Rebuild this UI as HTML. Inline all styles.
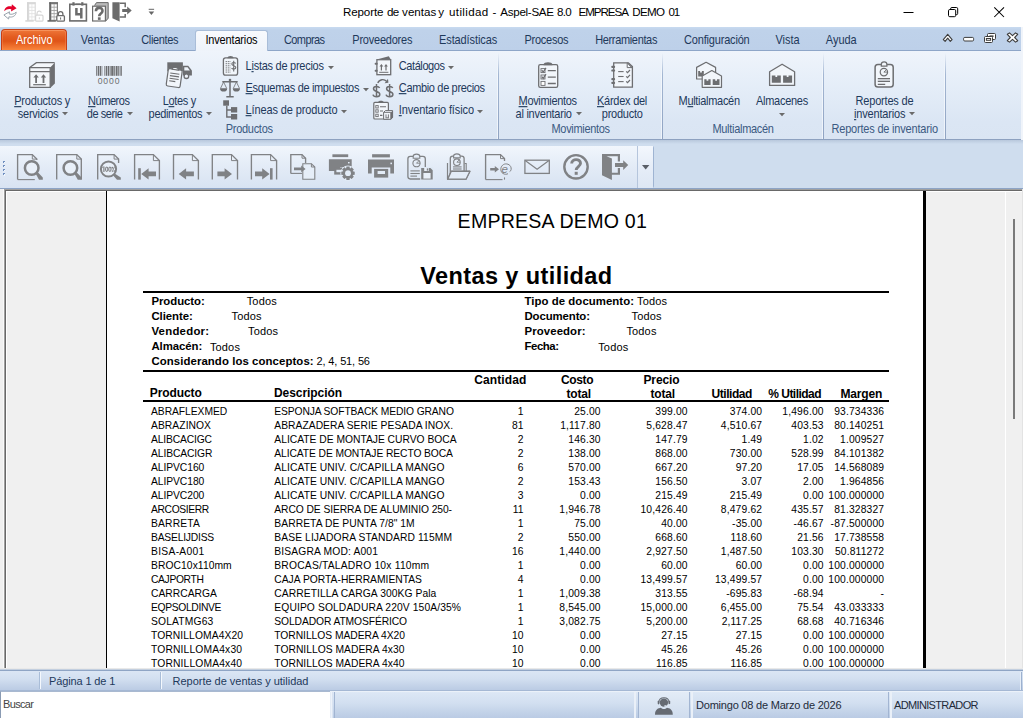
<!DOCTYPE html>
<html><head><meta charset="utf-8"><title>Reporte de ventas y utilidad - Aspel-SAE 8.0</title>
<style>
html,body{margin:0;padding:0;background:#fff;}
body{width:1023px;height:718px;overflow:hidden;font-family:"Liberation Sans",sans-serif;}
#app{position:relative;width:1023px;height:718px;overflow:hidden;background:#fff;}
.t{position:absolute;white-space:pre;line-height:normal;font-family:"Liberation Sans",sans-serif;}
.t u{text-decoration:underline;text-underline-offset:1px;text-decoration-thickness:1px;}
.b{position:absolute;}
svg{position:absolute;overflow:visible;}

</style></head>
<body>
<div id="app">
<div class="b" style="left:0px;top:0px;width:1023px;height:27px;background:#ffffff;"></div>
<span class="t" style="top:5.32px;font-size:11.6px;color:#000;letter-spacing:-0.108px;left:342.90px;">Reporte</span>
<span class="t" style="top:5.32px;font-size:11.6px;color:#000;letter-spacing:-0.706px;left:386.90px;">de</span>
<span class="t" style="top:5.32px;font-size:11.6px;color:#000;letter-spacing:-0.014px;left:402.10px;">ventas</span>
<span class="t" style="top:5.32px;font-size:11.6px;color:#000;left:438.30px;">y</span>
<span class="t" style="top:5.32px;font-size:11.6px;color:#000;letter-spacing:0.364px;left:449.00px;">utilidad</span>
<span class="t" style="top:5.32px;font-size:11.6px;color:#000;left:492.40px;">-</span>
<span class="t" style="top:5.32px;font-size:11.6px;color:#000;letter-spacing:-0.295px;left:500.30px;">Aspel-SAE</span>
<span class="t" style="top:5.32px;font-size:11.6px;color:#000;letter-spacing:-0.712px;left:556.90px;">8.0</span>
<span class="t" style="top:5.32px;font-size:11.6px;color:#000;letter-spacing:-1.051px;left:578.50px;">EMPRESA</span>
<span class="t" style="top:5.32px;font-size:11.6px;color:#000;letter-spacing:-0.627px;left:632.20px;">DEMO</span>
<span class="t" style="top:5.32px;font-size:11.6px;color:#000;letter-spacing:-1.206px;left:668.40px;">01</span>
<div class="b" style="left:0px;top:27px;width:1021px;height:24px;background:linear-gradient(#c8daf0 0,#bfd2ea 3px,#bdd0e9 100%);"></div>
<div class="b" style="left:0px;top:50px;width:1021px;height:1px;background:#8ea6c8;"></div>
<div class="b" style="left:1px;top:29px;width:66px;height:21px;background:linear-gradient(#ee7638 0%,#e35c20 35%,#df5417 55%,#ee6f2c 80%,#f9853c 100%);border:1px solid #c53f15;border-bottom:none;border-radius:4px 4px 0 0;box-sizing:border-box;box-shadow:inset 0 1px 0 rgba(255,170,120,.55),inset 1px 0 0 rgba(255,150,100,.35),inset -1px 0 0 rgba(255,150,100,.35);"></div>
<span class="t" style="top:33.87px;font-size:11px;color:#fff;letter-spacing:-0.031px;transform:scaleY(1.12);transform-origin:0 10.13px;left:16.00px;">Archivo</span>
<div class="b" style="left:195px;top:30px;width:73px;height:21px;background:linear-gradient(#f8fafd,#eef3fa);border:1px solid #a9bdd8;border-bottom:none;border-radius:3px 3px 0 0;box-sizing:border-box;"></div>
<span class="t" style="top:34.37px;font-size:11px;color:#1e395b;letter-spacing:0.052px;transform:scaleY(1.12);transform-origin:0 10.13px;left:80.80px;">Ventas</span>
<span class="t" style="top:34.37px;font-size:11px;color:#1e395b;letter-spacing:-0.350px;transform:scaleY(1.12);transform-origin:0 10.13px;left:141.20px;">Clientes</span>
<span class="t" style="top:34.37px;font-size:11px;color:#000;letter-spacing:-0.161px;transform:scaleY(1.12);transform-origin:0 10.13px;left:205.40px;">Inventarios</span>
<span class="t" style="top:34.37px;font-size:11px;color:#1e395b;letter-spacing:-0.604px;transform:scaleY(1.12);transform-origin:0 10.13px;left:284.00px;">Compras</span>
<span class="t" style="top:34.37px;font-size:11px;color:#1e395b;letter-spacing:-0.228px;transform:scaleY(1.12);transform-origin:0 10.13px;left:352.30px;">Proveedores</span>
<span class="t" style="top:34.37px;font-size:11px;color:#1e395b;letter-spacing:-0.101px;transform:scaleY(1.12);transform-origin:0 10.13px;left:439.00px;">Estadísticas</span>
<span class="t" style="top:34.37px;font-size:11px;color:#1e395b;letter-spacing:-0.237px;transform:scaleY(1.12);transform-origin:0 10.13px;left:524.40px;">Procesos</span>
<span class="t" style="top:34.37px;font-size:11px;color:#1e395b;letter-spacing:-0.348px;transform:scaleY(1.12);transform-origin:0 10.13px;left:595.20px;">Herramientas</span>
<span class="t" style="top:34.37px;font-size:11px;color:#1e395b;letter-spacing:-0.181px;transform:scaleY(1.12);transform-origin:0 10.13px;left:684.00px;">Configuración</span>
<span class="t" style="top:34.37px;font-size:11px;color:#1e395b;letter-spacing:-0.016px;transform:scaleY(1.12);transform-origin:0 10.13px;left:775.50px;">Vista</span>
<span class="t" style="top:34.37px;font-size:11px;color:#1e395b;letter-spacing:-0.025px;transform:scaleY(1.12);transform-origin:0 10.13px;left:825.80px;">Ayuda</span>
<div class="b" style="left:0px;top:51px;width:1021px;height:88px;background:linear-gradient(#eff4fb 0%,#e7eff9 30%,#dbe6f4 80%,#dae5f3 100%);"></div>
<div class="b" style="left:0px;top:139px;width:1021px;height:1px;background:#8da1c0;"></div>
<div class="b" style="left:497px;top:53px;width:1px;height:86px;background:linear-gradient(rgba(255,255,255,0),#f3f7fc 25%,#eef3fa 100%);"></div>
<div class="b" style="left:498px;top:53px;width:1px;height:86px;background:linear-gradient(rgba(160,180,208,0),#a3b6d2 25%,#8fa3c2 100%);"></div>
<div class="b" style="left:661px;top:53px;width:1px;height:86px;background:linear-gradient(rgba(255,255,255,0),#f3f7fc 25%,#eef3fa 100%);"></div>
<div class="b" style="left:662px;top:53px;width:1px;height:86px;background:linear-gradient(rgba(160,180,208,0),#a3b6d2 25%,#8fa3c2 100%);"></div>
<div class="b" style="left:822px;top:53px;width:1px;height:86px;background:linear-gradient(rgba(255,255,255,0),#f3f7fc 25%,#eef3fa 100%);"></div>
<div class="b" style="left:823px;top:53px;width:1px;height:86px;background:linear-gradient(rgba(160,180,208,0),#a3b6d2 25%,#8fa3c2 100%);"></div>
<div class="b" style="left:944px;top:53px;width:1px;height:86px;background:linear-gradient(rgba(255,255,255,0),#f3f7fc 25%,#eef3fa 100%);"></div>
<div class="b" style="left:945px;top:53px;width:1px;height:86px;background:linear-gradient(rgba(160,180,208,0),#a3b6d2 25%,#8fa3c2 100%);"></div>
<div class="b" style="left:1021px;top:27px;width:2px;height:113px;background:#f0f4fa;"></div>
<span class="t" style="top:95.37px;font-size:11px;color:#1e395b;letter-spacing:-0.199px;transform:scaleY(1.12);transform-origin:0 10.13px;left:14.20px;"><u>P</u>roductos y</span>
<span class="t" style="top:108.37px;font-size:11px;color:#1e395b;letter-spacing:-0.262px;transform:scaleY(1.12);transform-origin:0 10.13px;left:17.80px;">servicios</span>
<svg style="left:61.5px;top:111.8px" width="6" height="3.2" viewBox="0 0 6 3.2"><path d="M0 0h6L3 3.2z" fill="#6a6a6a"/></svg>
<span class="t" style="top:95.37px;font-size:11px;color:#1e395b;letter-spacing:-0.438px;transform:scaleY(1.12);transform-origin:0 10.13px;left:88.00px;"><u>N</u>úmeros</span>
<span class="t" style="top:108.37px;font-size:11px;color:#1e395b;letter-spacing:-0.406px;transform:scaleY(1.12);transform-origin:0 10.13px;left:86.70px;">de serie</span>
<svg style="left:126.5px;top:111.8px" width="6" height="3.2" viewBox="0 0 6 3.2"><path d="M0 0h6L3 3.2z" fill="#6a6a6a"/></svg>
<span class="t" style="top:95.37px;font-size:11px;color:#1e395b;letter-spacing:-0.311px;transform:scaleY(1.12);transform-origin:0 10.13px;left:162.70px;">L<u>o</u>tes y</span>
<span class="t" style="top:108.37px;font-size:11px;color:#1e395b;letter-spacing:-0.319px;transform:scaleY(1.12);transform-origin:0 10.13px;left:148.60px;">pedimentos</span>
<svg style="left:205.5px;top:111.8px" width="6" height="3.2" viewBox="0 0 6 3.2"><path d="M0 0h6L3 3.2z" fill="#6a6a6a"/></svg>
<span class="t" style="top:59.87px;font-size:11px;color:#1e395b;letter-spacing:-0.265px;transform:scaleY(1.12);transform-origin:0 10.13px;left:245.60px;">L<u>i</u>stas de precios</span>
<svg style="left:327.5px;top:65.8px" width="6" height="3.2" viewBox="0 0 6 3.2"><path d="M0 0h6L3 3.2z" fill="#6a6a6a"/></svg>
<span class="t" style="top:81.87px;font-size:11px;color:#1e395b;letter-spacing:-0.333px;transform:scaleY(1.12);transform-origin:0 10.13px;left:245.60px;"><u>E</u>squemas de impuestos</span>
<svg style="left:362.5px;top:87.8px" width="6" height="3.2" viewBox="0 0 6 3.2"><path d="M0 0h6L3 3.2z" fill="#6a6a6a"/></svg>
<span class="t" style="top:103.87px;font-size:11px;color:#1e395b;letter-spacing:-0.129px;transform:scaleY(1.12);transform-origin:0 10.13px;left:245.60px;"><u>L</u>íneas de producto</span>
<svg style="left:341px;top:109.8px" width="6" height="3.2" viewBox="0 0 6 3.2"><path d="M0 0h6L3 3.2z" fill="#6a6a6a"/></svg>
<span class="t" style="top:59.87px;font-size:11px;color:#1e395b;letter-spacing:-0.418px;transform:scaleY(1.12);transform-origin:0 10.13px;left:398.80px;">Catálogos</span>
<svg style="left:447.5px;top:65.8px" width="6" height="3.2" viewBox="0 0 6 3.2"><path d="M0 0h6L3 3.2z" fill="#6a6a6a"/></svg>
<span class="t" style="top:81.87px;font-size:11px;color:#1e395b;letter-spacing:-0.345px;transform:scaleY(1.12);transform-origin:0 10.13px;left:398.80px;"><u>C</u>ambio de precios</span>
<span class="t" style="top:103.87px;font-size:11px;color:#1e395b;letter-spacing:-0.115px;transform:scaleY(1.12);transform-origin:0 10.13px;left:398.80px;"><u>I</u>nventario físico</span>
<svg style="left:477px;top:109.8px" width="6" height="3.2" viewBox="0 0 6 3.2"><path d="M0 0h6L3 3.2z" fill="#6a6a6a"/></svg>
<span class="t" style="top:95.37px;font-size:11px;color:#1e395b;letter-spacing:-0.335px;transform:scaleY(1.12);transform-origin:0 10.13px;left:518.60px;"><u>M</u>ovimientos</span>
<span class="t" style="top:108.37px;font-size:11px;color:#1e395b;letter-spacing:-0.236px;transform:scaleY(1.12);transform-origin:0 10.13px;left:515.50px;">al inventario</span>
<svg style="left:575.5px;top:111.8px" width="6" height="3.2" viewBox="0 0 6 3.2"><path d="M0 0h6L3 3.2z" fill="#6a6a6a"/></svg>
<span class="t" style="top:95.37px;font-size:11px;color:#1e395b;letter-spacing:-0.255px;transform:scaleY(1.12);transform-origin:0 10.13px;left:597.00px;"><u>K</u>árdex del</span>
<span class="t" style="top:108.37px;font-size:11px;color:#1e395b;letter-spacing:-0.259px;transform:scaleY(1.12);transform-origin:0 10.13px;left:601.80px;">producto</span>
<span class="t" style="top:95.37px;font-size:11px;color:#1e395b;letter-spacing:-0.301px;transform:scaleY(1.12);transform-origin:0 10.13px;left:678.50px;">M<u>u</u>ltialmacén</span>
<span class="t" style="top:95.37px;font-size:11px;color:#1e395b;letter-spacing:-0.265px;transform:scaleY(1.12);transform-origin:0 10.13px;left:755.90px;">Almacenes</span>
<svg style="left:778.5px;top:112.8px" width="6" height="3.2" viewBox="0 0 6 3.2"><path d="M0 0h6L3 3.2z" fill="#6a6a6a"/></svg>
<span class="t" style="top:95.37px;font-size:11px;color:#1e395b;letter-spacing:-0.184px;transform:scaleY(1.12);transform-origin:0 10.13px;left:855.50px;">Reportes de</span>
<span class="t" style="top:108.37px;font-size:11px;color:#1e395b;letter-spacing:-0.180px;transform:scaleY(1.12);transform-origin:0 10.13px;left:854.00px;"><u>i</u>nventarios</span>
<svg style="left:908.5px;top:111.8px" width="6" height="3.2" viewBox="0 0 6 3.2"><path d="M0 0h6L3 3.2z" fill="#6a6a6a"/></svg>
<span class="t" style="top:123.37px;font-size:11px;color:#3b5a82;letter-spacing:-0.279px;transform:scaleY(1.12);transform-origin:0 10.13px;left:225.70px;">Productos</span>
<span class="t" style="top:123.37px;font-size:11px;color:#3b5a82;letter-spacing:-0.325px;transform:scaleY(1.12);transform-origin:0 10.13px;left:551.50px;">Movimientos</span>
<span class="t" style="top:123.37px;font-size:11px;color:#3b5a82;letter-spacing:-0.292px;transform:scaleY(1.12);transform-origin:0 10.13px;left:712.40px;">Multialmacén</span>
<span class="t" style="top:123.37px;font-size:11px;color:#3b5a82;letter-spacing:-0.199px;transform:scaleY(1.12);transform-origin:0 10.13px;left:831.50px;">Reportes de inventario</span>
<div class="b" style="left:0px;top:140px;width:1023px;height:50px;background:#cfddee;"></div>
<div class="b" style="left:0px;top:140px;width:1023px;height:4px;background:linear-gradient(#b9c8dc,#cfddee);"></div>
<div class="b" style="left:0px;top:146px;width:653px;height:42px;background:linear-gradient(#f1f6fc 0%,#e4ecf7 45%,#d8e3f2 100%);border-right:1px solid #9fb4d2;border-radius:0 2px 2px 0;"></div>
<div class="b" style="left:637px;top:146px;width:1px;height:42px;background:#b5c5dc;"></div>
<div class="b" style="left:638px;top:146px;width:15px;height:42px;background:linear-gradient(#f3f7fd,#e6edf8 50%,#dde7f4);"></div>
<div class="b" style="left:3px;top:160.7px;width:2px;height:2px;background:#6f8fc0;"></div>
<div class="b" style="left:4px;top:161.7px;width:1.4px;height:1.4px;background:#f4f8fd;"></div>
<div class="b" style="left:3px;top:164.9px;width:2px;height:2px;background:#6f8fc0;"></div>
<div class="b" style="left:4px;top:165.9px;width:1.4px;height:1.4px;background:#f4f8fd;"></div>
<div class="b" style="left:3px;top:169px;width:2px;height:2px;background:#6f8fc0;"></div>
<div class="b" style="left:4px;top:170px;width:1.4px;height:1.4px;background:#f4f8fd;"></div>
<div class="b" style="left:3px;top:173.2px;width:2px;height:2px;background:#6f8fc0;"></div>
<div class="b" style="left:4px;top:174.2px;width:1.4px;height:1.4px;background:#f4f8fd;"></div>
<svg style="left:641.8px;top:164.9px" width="7.4" height="4.4" viewBox="0 0 7.4 4.4"><path d="M0 0h7.4L3.7 4.4z" fill="#5a5f68"/></svg>
<div class="b" style="left:0px;top:188px;width:1023px;height:1px;background:#8da4c6;"></div>
<div class="b" style="left:0px;top:189px;width:1023px;height:480px;background:#f0f0f0;"></div>
<div class="b" style="left:3px;top:189px;width:1px;height:479px;background:#fafafa;"></div>
<div class="b" style="left:4px;top:189px;width:1018px;height:1px;background:#a0a0a0;"></div>
<div class="b" style="left:4px;top:189px;width:1px;height:479px;background:#a0a0a0;"></div>
<div class="b" style="left:5px;top:190px;width:1017px;height:1px;background:#696969;"></div>
<div class="b" style="left:5px;top:190px;width:1px;height:478px;background:#696969;"></div>
<div class="b" style="left:6px;top:191px;width:1016px;height:1px;background:#ffffff;"></div>
<div class="b" style="left:6px;top:191px;width:1px;height:477px;background:#ffffff;"></div>
<div class="b" style="left:107px;top:191px;width:817px;height:477px;background:#ffffff;"></div>
<div class="b" style="left:106px;top:191px;width:1px;height:477px;background:#000;"></div>
<div class="b" style="left:923px;top:191px;width:3px;height:477px;background:#000;"></div>
<div class="b" style="left:1005px;top:192px;width:1px;height:476px;background:#ffffff;"></div>
<div class="b" style="left:1022px;top:189px;width:1px;height:479px;background:#e3e3e3;"></div>
<div class="b" style="left:1013px;top:219px;width:2px;height:200px;background:#7a7a7a;"></div>
<div class="b" style="left:0px;top:668px;width:1023px;height:1px;background:#e9e9e9;"></div>
<div class="b" style="left:0px;top:669px;width:1023px;height:1px;background:#c3cfdf;"></div>
<div class="b" style="left:0px;top:670px;width:1023px;height:1px;background:#8fa5c5;"></div>
<div class="b" style="left:0px;top:671px;width:1023px;height:20px;background:linear-gradient(#dbe6f4 0%,#d2dff0 40%,#c3d2e8 75%,#b9cae3 100%);"></div>
<div class="b" style="left:0px;top:690px;width:1023px;height:1px;background:#a5b8d4;"></div>
<div class="b" style="left:39px;top:672px;width:1px;height:17px;background:#a9bdd8;"></div>
<div class="b" style="left:40px;top:672px;width:1px;height:17px;background:#f4f8fd;"></div>
<div class="b" style="left:160px;top:672px;width:1px;height:17px;background:#a9bdd8;"></div>
<div class="b" style="left:161px;top:672px;width:1px;height:17px;background:#f4f8fd;"></div>
<span class="t" style="top:674.87px;font-size:11px;color:#1e395b;letter-spacing:-0.133px;left:49.00px;">Página 1 de 1</span>
<span class="t" style="top:674.87px;font-size:11px;color:#1e395b;letter-spacing:-0.014px;left:172.50px;">Reporte de ventas y utilidad</span>
<div class="b" style="left:0px;top:691px;width:1023px;height:27px;background:linear-gradient(#f2f6fb 0%,#dce7f5 6%,#d2dff0 45%,#c2d2e8 80%,#bacbe4 100%);"></div>
<div class="b" style="left:0px;top:691px;width:330px;height:27px;background:#ffffff;border-left:1px solid #8a9bb3;border-top:1px solid #a9b9d0;box-sizing:border-box;"></div>
<span class="t" style="top:698.37px;font-size:11px;color:#444;letter-spacing:-0.650px;left:3.00px;">Buscar</span>
<div class="b" style="left:330px;top:692px;width:3px;height:26px;background:linear-gradient(90deg,#dfe8f4,#eef3fa,#cfdcee);"></div>
<div class="b" style="left:334px;top:692px;width:1px;height:26px;background:#a2b5d2;"></div>
<div class="b" style="left:634px;top:692px;width:2px;height:26px;background:#eaf0f8;"></div>
<div class="b" style="left:638px;top:692px;width:1px;height:26px;background:#a2b5d2;"></div>
<div class="b" style="left:639px;top:692px;width:50px;height:26px;background:linear-gradient(#e3ecf7,#d9e4f2 50%,#cfdcee);"></div>
<div class="b" style="left:689px;top:692px;width:1px;height:26px;background:#a2b5d2;"></div>
<div class="b" style="left:691px;top:692px;width:2px;height:26px;background:#eaf0f8;"></div>
<div class="b" style="left:888px;top:692px;width:1px;height:26px;background:#a2b5d2;"></div>
<div class="b" style="left:890px;top:692px;width:2px;height:26px;background:#eaf0f8;"></div>
<div class="b" style="left:1020px;top:672px;width:1px;height:18px;background:#e6eef8;"></div>
<div class="b" style="left:1021px;top:672px;width:1px;height:18px;background:#9db1cf;"></div>
<span class="t" style="top:698.87px;font-size:11px;color:#222b3a;letter-spacing:-0.213px;left:696.00px;">Domingo 08 de Marzo de 2026</span>
<span class="t" style="top:698.87px;font-size:11px;color:#222b3a;letter-spacing:-0.648px;left:894.00px;">ADMINISTRADOR</span>
<span class="t" style="top:209.55px;font-size:19.6px;color:#000;letter-spacing:0.214px;left:457.60px;">EMPRESA DEMO 01</span>
<span class="t" style="top:262.66px;font-size:23.5px;color:#000;font-weight:700;letter-spacing:0.409px;left:420.20px;">Ventas y utilidad</span>
<div class="b" style="left:143px;top:291px;width:746px;height:2px;background:#000;"></div>
<div class="b" style="left:143px;top:370px;width:746px;height:2px;background:#000;"></div>
<div class="b" style="left:143px;top:400px;width:746px;height:2px;background:#000;"></div>
<span class="t" style="top:294.50px;font-size:11.4px;color:#000;font-weight:700;letter-spacing:-0.050px;left:151.40px;">Producto:</span>
<span class="t" style="top:294.87px;font-size:11px;color:#000;letter-spacing:0.160px;left:246.70px;">Todos</span>
<span class="t" style="top:309.50px;font-size:11.4px;color:#000;font-weight:700;letter-spacing:-0.040px;left:151.40px;">Cliente:</span>
<span class="t" style="top:309.87px;font-size:11px;color:#000;letter-spacing:0.160px;left:231.50px;">Todos</span>
<span class="t" style="top:324.50px;font-size:11.4px;color:#000;font-weight:700;letter-spacing:0.250px;left:151.40px;">Vendedor:</span>
<span class="t" style="top:324.87px;font-size:11px;color:#000;letter-spacing:0.160px;left:248.00px;">Todos</span>
<span class="t" style="top:340.30px;font-size:11.4px;color:#000;font-weight:700;letter-spacing:-0.054px;left:151.40px;">Almacén:</span>
<span class="t" style="top:340.67px;font-size:11px;color:#000;letter-spacing:0.160px;left:209.90px;">Todos</span>
<span class="t" style="top:354.80px;font-size:11.4px;color:#000;font-weight:700;letter-spacing:0.080px;left:151.40px;">Considerando los conceptos:</span>
<span class="t" style="top:355.17px;font-size:11px;color:#000;letter-spacing:-0.150px;left:316.60px;">2, 4, 51, 56</span>
<span class="t" style="top:294.50px;font-size:11.4px;color:#000;font-weight:700;letter-spacing:0.051px;left:524.50px;">Tipo de documento:</span>
<span class="t" style="top:294.87px;font-size:11px;color:#000;letter-spacing:0.160px;left:637.00px;">Todos</span>
<span class="t" style="top:309.50px;font-size:11.4px;color:#000;font-weight:700;letter-spacing:-0.106px;left:524.50px;">Documento:</span>
<span class="t" style="top:309.87px;font-size:11px;color:#000;letter-spacing:0.160px;left:631.50px;">Todos</span>
<span class="t" style="top:324.50px;font-size:11.4px;color:#000;font-weight:700;letter-spacing:0.095px;left:524.50px;">Proveedor:</span>
<span class="t" style="top:324.87px;font-size:11px;color:#000;letter-spacing:0.160px;left:626.40px;">Todos</span>
<span class="t" style="top:340.30px;font-size:11.4px;color:#000;font-weight:700;letter-spacing:-0.444px;left:524.50px;">Fecha:</span>
<span class="t" style="top:340.67px;font-size:11px;color:#000;letter-spacing:0.160px;left:598.20px;">Todos</span>
<span class="t" style="top:385.95px;font-size:12px;color:#000;font-weight:700;letter-spacing:-0.096px;left:149.80px;">Producto</span>
<span class="t" style="top:385.95px;font-size:12px;color:#000;font-weight:700;letter-spacing:-0.070px;left:274.00px;">Descripción</span>
<span class="t" style="top:372.95px;font-size:12px;color:#000;font-weight:700;letter-spacing:0.094px;left:474.30px;">Cantidad</span>
<span class="t" style="top:372.95px;font-size:12px;color:#000;font-weight:700;letter-spacing:-0.375px;left:561.00px;">Costo</span>
<span class="t" style="top:386.95px;font-size:12px;color:#000;font-weight:700;letter-spacing:-0.211px;left:566.50px;">total</span>
<span class="t" style="top:372.95px;font-size:12px;color:#000;font-weight:700;letter-spacing:-0.138px;left:643.50px;">Precio</span>
<span class="t" style="top:386.95px;font-size:12px;color:#000;font-weight:700;letter-spacing:-0.211px;left:650.50px;">total</span>
<span class="t" style="top:386.95px;font-size:12px;color:#000;font-weight:700;letter-spacing:-0.471px;left:711.60px;">Utilidad</span>
<span class="t" style="top:386.95px;font-size:12px;color:#000;font-weight:700;letter-spacing:-0.524px;left:768.30px;">% Utilidad</span>
<span class="t" style="top:386.95px;font-size:12px;color:#000;font-weight:700;letter-spacing:-0.138px;left:840.40px;">Margen</span>
<div class="b" style="left:107px;top:402px;width:816px;height:266px;overflow:hidden">
<span class="t" style="top:3.51px;font-size:10.3px;letter-spacing:-0.049px;left:44px">ABRAFLEXMED</span>
<span class="t" style="top:3.51px;font-size:10.3px;letter-spacing:-0.129px;left:167.3px">ESPONJA SOFTBACK MEDIO GRANO</span>
<span class="t" style="top:3.51px;font-size:10.3px;letter-spacing:0.15px;right:399.35px">1</span>
<span class="t" style="top:3.51px;font-size:10.3px;letter-spacing:0.15px;right:322.35px">25.00</span>
<span class="t" style="top:3.51px;font-size:10.3px;letter-spacing:0.15px;right:235.35px">399.00</span>
<span class="t" style="top:3.51px;font-size:10.3px;letter-spacing:0.15px;right:160.85px">374.00</span>
<span class="t" style="top:3.51px;font-size:10.3px;letter-spacing:0.15px;right:99.35px">1,496.00</span>
<span class="t" style="top:3.51px;font-size:10.3px;letter-spacing:0.15px;right:38.85px">93.734336</span>
<span class="t" style="top:17.51px;font-size:10.3px;letter-spacing:0.061px;left:44px">ABRAZINOX</span>
<span class="t" style="top:17.51px;font-size:10.3px;letter-spacing:0.026px;left:167.3px">ABRAZADERA SERIE PESADA INOX.</span>
<span class="t" style="top:17.51px;font-size:10.3px;letter-spacing:0.15px;right:399.35px">81</span>
<span class="t" style="top:17.51px;font-size:10.3px;letter-spacing:0.15px;right:322.35px">1,117.80</span>
<span class="t" style="top:17.51px;font-size:10.3px;letter-spacing:0.15px;right:235.35px">5,628.47</span>
<span class="t" style="top:17.51px;font-size:10.3px;letter-spacing:0.15px;right:160.85px">4,510.67</span>
<span class="t" style="top:17.51px;font-size:10.3px;letter-spacing:0.15px;right:99.35px">403.53</span>
<span class="t" style="top:17.51px;font-size:10.3px;letter-spacing:0.15px;right:38.85px">80.140251</span>
<span class="t" style="top:31.51px;font-size:10.3px;letter-spacing:-0.153px;left:44px">ALIBCACIGC</span>
<span class="t" style="top:31.51px;font-size:10.3px;letter-spacing:-0.008px;left:167.3px">ALICATE DE MONTAJE CURVO BOCA</span>
<span class="t" style="top:31.51px;font-size:10.3px;letter-spacing:0.15px;right:399.35px">2</span>
<span class="t" style="top:31.51px;font-size:10.3px;letter-spacing:0.15px;right:322.35px">146.30</span>
<span class="t" style="top:31.51px;font-size:10.3px;letter-spacing:0.15px;right:235.35px">147.79</span>
<span class="t" style="top:31.51px;font-size:10.3px;letter-spacing:0.15px;right:160.85px">1.49</span>
<span class="t" style="top:31.51px;font-size:10.3px;letter-spacing:0.15px;right:99.35px">1.02</span>
<span class="t" style="top:31.51px;font-size:10.3px;letter-spacing:0.15px;right:38.85px">1.009527</span>
<span class="t" style="top:45.51px;font-size:10.3px;letter-spacing:-0.108px;left:44px">ALIBCACIGR</span>
<span class="t" style="top:45.51px;font-size:10.3px;letter-spacing:-0.096px;left:167.3px">ALICATE DE MONTAJE RECTO BOCA</span>
<span class="t" style="top:45.51px;font-size:10.3px;letter-spacing:0.15px;right:399.35px">2</span>
<span class="t" style="top:45.51px;font-size:10.3px;letter-spacing:0.15px;right:322.35px">138.00</span>
<span class="t" style="top:45.51px;font-size:10.3px;letter-spacing:0.15px;right:235.35px">868.00</span>
<span class="t" style="top:45.51px;font-size:10.3px;letter-spacing:0.15px;right:160.85px">730.00</span>
<span class="t" style="top:45.51px;font-size:10.3px;letter-spacing:0.15px;right:99.35px">528.99</span>
<span class="t" style="top:45.51px;font-size:10.3px;letter-spacing:0.15px;right:38.85px">84.101382</span>
<span class="t" style="top:59.51px;font-size:10.3px;letter-spacing:-0.064px;left:44px">ALIPVC160</span>
<span class="t" style="top:59.51px;font-size:10.3px;letter-spacing:0.067px;left:167.3px">ALICATE UNIV. C/CAPILLA MANGO</span>
<span class="t" style="top:59.51px;font-size:10.3px;letter-spacing:0.15px;right:399.35px">6</span>
<span class="t" style="top:59.51px;font-size:10.3px;letter-spacing:0.15px;right:322.35px">570.00</span>
<span class="t" style="top:59.51px;font-size:10.3px;letter-spacing:0.15px;right:235.35px">667.20</span>
<span class="t" style="top:59.51px;font-size:10.3px;letter-spacing:0.15px;right:160.85px">97.20</span>
<span class="t" style="top:59.51px;font-size:10.3px;letter-spacing:0.15px;right:99.35px">17.05</span>
<span class="t" style="top:59.51px;font-size:10.3px;letter-spacing:0.15px;right:38.85px">14.568089</span>
<span class="t" style="top:73.51px;font-size:10.3px;letter-spacing:-0.064px;left:44px">ALIPVC180</span>
<span class="t" style="top:73.51px;font-size:10.3px;letter-spacing:0.067px;left:167.3px">ALICATE UNIV. C/CAPILLA MANGO</span>
<span class="t" style="top:73.51px;font-size:10.3px;letter-spacing:0.15px;right:399.35px">2</span>
<span class="t" style="top:73.51px;font-size:10.3px;letter-spacing:0.15px;right:322.35px">153.43</span>
<span class="t" style="top:73.51px;font-size:10.3px;letter-spacing:0.15px;right:235.35px">156.50</span>
<span class="t" style="top:73.51px;font-size:10.3px;letter-spacing:0.15px;right:160.85px">3.07</span>
<span class="t" style="top:73.51px;font-size:10.3px;letter-spacing:0.15px;right:99.35px">2.00</span>
<span class="t" style="top:73.51px;font-size:10.3px;letter-spacing:0.15px;right:38.85px">1.964856</span>
<span class="t" style="top:87.51px;font-size:10.3px;letter-spacing:-0.064px;left:44px">ALIPVC200</span>
<span class="t" style="top:87.51px;font-size:10.3px;letter-spacing:0.067px;left:167.3px">ALICATE UNIV. C/CAPILLA MANGO</span>
<span class="t" style="top:87.51px;font-size:10.3px;letter-spacing:0.15px;right:399.35px">3</span>
<span class="t" style="top:87.51px;font-size:10.3px;letter-spacing:0.15px;right:322.35px">0.00</span>
<span class="t" style="top:87.51px;font-size:10.3px;letter-spacing:0.15px;right:235.35px">215.49</span>
<span class="t" style="top:87.51px;font-size:10.3px;letter-spacing:0.15px;right:160.85px">215.49</span>
<span class="t" style="top:87.51px;font-size:10.3px;letter-spacing:0.15px;right:99.35px">0.00</span>
<span class="t" style="top:87.51px;font-size:10.3px;letter-spacing:0.15px;right:38.85px">100.000000</span>
<span class="t" style="top:101.51px;font-size:10.3px;letter-spacing:-0.365px;left:44px">ARCOSIERR</span>
<span class="t" style="top:101.51px;font-size:10.3px;letter-spacing:-0.085px;left:167.3px">ARCO DE SIERRA DE ALUMINIO 250-</span>
<span class="t" style="top:101.51px;font-size:10.3px;letter-spacing:0.15px;right:399.35px">11</span>
<span class="t" style="top:101.51px;font-size:10.3px;letter-spacing:0.15px;right:322.35px">1,946.78</span>
<span class="t" style="top:101.51px;font-size:10.3px;letter-spacing:0.15px;right:235.35px">10,426.40</span>
<span class="t" style="top:101.51px;font-size:10.3px;letter-spacing:0.15px;right:160.85px">8,479.62</span>
<span class="t" style="top:101.51px;font-size:10.3px;letter-spacing:0.15px;right:99.35px">435.57</span>
<span class="t" style="top:101.51px;font-size:10.3px;letter-spacing:0.15px;right:38.85px">81.328327</span>
<span class="t" style="top:115.51px;font-size:10.3px;letter-spacing:0.154px;left:44px">BARRETA</span>
<span class="t" style="top:115.51px;font-size:10.3px;letter-spacing:0.066px;left:167.3px">BARRETA DE PUNTA 7/8&quot; 1M</span>
<span class="t" style="top:115.51px;font-size:10.3px;letter-spacing:0.15px;right:399.35px">1</span>
<span class="t" style="top:115.51px;font-size:10.3px;letter-spacing:0.15px;right:322.35px">75.00</span>
<span class="t" style="top:115.51px;font-size:10.3px;letter-spacing:0.15px;right:235.35px">40.00</span>
<span class="t" style="top:115.51px;font-size:10.3px;letter-spacing:0.15px;right:160.85px">-35.00</span>
<span class="t" style="top:115.51px;font-size:10.3px;letter-spacing:0.15px;right:99.35px">-46.67</span>
<span class="t" style="top:115.51px;font-size:10.3px;letter-spacing:0.15px;right:38.85px">-87.500000</span>
<span class="t" style="top:129.51px;font-size:10.3px;letter-spacing:-0.205px;left:44px">BASELIJDISS</span>
<span class="t" style="top:129.51px;font-size:10.3px;letter-spacing:0.089px;left:167.3px">BASE LIJADORA STANDARD 115MM</span>
<span class="t" style="top:129.51px;font-size:10.3px;letter-spacing:0.15px;right:399.35px">2</span>
<span class="t" style="top:129.51px;font-size:10.3px;letter-spacing:0.15px;right:322.35px">550.00</span>
<span class="t" style="top:129.51px;font-size:10.3px;letter-spacing:0.15px;right:235.35px">668.60</span>
<span class="t" style="top:129.51px;font-size:10.3px;letter-spacing:0.15px;right:160.85px">118.60</span>
<span class="t" style="top:129.51px;font-size:10.3px;letter-spacing:0.15px;right:99.35px">21.56</span>
<span class="t" style="top:129.51px;font-size:10.3px;letter-spacing:0.15px;right:38.85px">17.738558</span>
<span class="t" style="top:143.51px;font-size:10.3px;letter-spacing:0.293px;left:44px">BISA-A001</span>
<span class="t" style="top:143.51px;font-size:10.3px;letter-spacing:0.144px;left:167.3px">BISAGRA MOD: A001</span>
<span class="t" style="top:143.51px;font-size:10.3px;letter-spacing:0.15px;right:399.35px">16</span>
<span class="t" style="top:143.51px;font-size:10.3px;letter-spacing:0.15px;right:322.35px">1,440.00</span>
<span class="t" style="top:143.51px;font-size:10.3px;letter-spacing:0.15px;right:235.35px">2,927.50</span>
<span class="t" style="top:143.51px;font-size:10.3px;letter-spacing:0.15px;right:160.85px">1,487.50</span>
<span class="t" style="top:143.51px;font-size:10.3px;letter-spacing:0.15px;right:99.35px">103.30</span>
<span class="t" style="top:143.51px;font-size:10.3px;letter-spacing:0.15px;right:38.85px">50.811272</span>
<span class="t" style="top:157.51px;font-size:10.3px;letter-spacing:0.071px;left:44px">BROC10x110mm</span>
<span class="t" style="top:157.51px;font-size:10.3px;letter-spacing:0.204px;left:167.3px">BROCAS/TALADRO 10x 110mm</span>
<span class="t" style="top:157.51px;font-size:10.3px;letter-spacing:0.15px;right:399.35px">1</span>
<span class="t" style="top:157.51px;font-size:10.3px;letter-spacing:0.15px;right:322.35px">0.00</span>
<span class="t" style="top:157.51px;font-size:10.3px;letter-spacing:0.15px;right:235.35px">60.00</span>
<span class="t" style="top:157.51px;font-size:10.3px;letter-spacing:0.15px;right:160.85px">60.00</span>
<span class="t" style="top:157.51px;font-size:10.3px;letter-spacing:0.15px;right:99.35px">0.00</span>
<span class="t" style="top:157.51px;font-size:10.3px;letter-spacing:0.15px;right:38.85px">100.000000</span>
<span class="t" style="top:171.51px;font-size:10.3px;letter-spacing:-0.345px;left:44px">CAJPORTH</span>
<span class="t" style="top:171.51px;font-size:10.3px;letter-spacing:0.003px;left:167.3px">CAJA PORTA-HERRAMIENTAS</span>
<span class="t" style="top:171.51px;font-size:10.3px;letter-spacing:0.15px;right:399.35px">4</span>
<span class="t" style="top:171.51px;font-size:10.3px;letter-spacing:0.15px;right:322.35px">0.00</span>
<span class="t" style="top:171.51px;font-size:10.3px;letter-spacing:0.15px;right:235.35px">13,499.57</span>
<span class="t" style="top:171.51px;font-size:10.3px;letter-spacing:0.15px;right:160.85px">13,499.57</span>
<span class="t" style="top:171.51px;font-size:10.3px;letter-spacing:0.15px;right:99.35px">0.00</span>
<span class="t" style="top:171.51px;font-size:10.3px;letter-spacing:0.15px;right:38.85px">100.000000</span>
<span class="t" style="top:185.51px;font-size:10.3px;letter-spacing:0.013px;left:44px">CARRCARGA</span>
<span class="t" style="top:185.51px;font-size:10.3px;letter-spacing:0.067px;left:167.3px">CARRETILLA CARGA 300KG Pala</span>
<span class="t" style="top:185.51px;font-size:10.3px;letter-spacing:0.15px;right:399.35px">1</span>
<span class="t" style="top:185.51px;font-size:10.3px;letter-spacing:0.15px;right:322.35px">1,009.38</span>
<span class="t" style="top:185.51px;font-size:10.3px;letter-spacing:0.15px;right:235.35px">313.55</span>
<span class="t" style="top:185.51px;font-size:10.3px;letter-spacing:0.15px;right:160.85px">-695.83</span>
<span class="t" style="top:185.51px;font-size:10.3px;letter-spacing:0.15px;right:99.35px">-68.94</span>
<span class="t" style="top:185.51px;font-size:10.3px;letter-spacing:0.15px;right:38.85px">-</span>
<span class="t" style="top:199.51px;font-size:10.3px;letter-spacing:-0.343px;left:44px">EQPSOLDINVE</span>
<span class="t" style="top:199.51px;font-size:10.3px;letter-spacing:0.103px;left:167.3px">EQUIPO SOLDADURA 220V 150A/35%</span>
<span class="t" style="top:199.51px;font-size:10.3px;letter-spacing:0.15px;right:399.35px">1</span>
<span class="t" style="top:199.51px;font-size:10.3px;letter-spacing:0.15px;right:322.35px">8,545.00</span>
<span class="t" style="top:199.51px;font-size:10.3px;letter-spacing:0.15px;right:235.35px">15,000.00</span>
<span class="t" style="top:199.51px;font-size:10.3px;letter-spacing:0.15px;right:160.85px">6,455.00</span>
<span class="t" style="top:199.51px;font-size:10.3px;letter-spacing:0.15px;right:99.35px">75.54</span>
<span class="t" style="top:199.51px;font-size:10.3px;letter-spacing:0.15px;right:38.85px">43.033333</span>
<span class="t" style="top:213.51px;font-size:10.3px;letter-spacing:0.157px;left:44px">SOLATMG63</span>
<span class="t" style="top:213.51px;font-size:10.3px;letter-spacing:-0.108px;left:167.3px">SOLDADOR ATMOSFÉRICO</span>
<span class="t" style="top:213.51px;font-size:10.3px;letter-spacing:0.15px;right:399.35px">1</span>
<span class="t" style="top:213.51px;font-size:10.3px;letter-spacing:0.15px;right:322.35px">3,082.75</span>
<span class="t" style="top:213.51px;font-size:10.3px;letter-spacing:0.15px;right:235.35px">5,200.00</span>
<span class="t" style="top:213.51px;font-size:10.3px;letter-spacing:0.15px;right:160.85px">2,117.25</span>
<span class="t" style="top:213.51px;font-size:10.3px;letter-spacing:0.15px;right:99.35px">68.68</span>
<span class="t" style="top:213.51px;font-size:10.3px;letter-spacing:0.15px;right:38.85px">40.716346</span>
<span class="t" style="top:227.51px;font-size:10.3px;letter-spacing:0.091px;left:44px">TORNILLOMA4X20</span>
<span class="t" style="top:227.51px;font-size:10.3px;letter-spacing:-0.042px;left:167.3px">TORNILLOS MADERA 4X20</span>
<span class="t" style="top:227.51px;font-size:10.3px;letter-spacing:0.15px;right:399.35px">10</span>
<span class="t" style="top:227.51px;font-size:10.3px;letter-spacing:0.15px;right:322.35px">0.00</span>
<span class="t" style="top:227.51px;font-size:10.3px;letter-spacing:0.15px;right:235.35px">27.15</span>
<span class="t" style="top:227.51px;font-size:10.3px;letter-spacing:0.15px;right:160.85px">27.15</span>
<span class="t" style="top:227.51px;font-size:10.3px;letter-spacing:0.15px;right:99.35px">0.00</span>
<span class="t" style="top:227.51px;font-size:10.3px;letter-spacing:0.15px;right:38.85px">100.000000</span>
<span class="t" style="top:241.51px;font-size:10.3px;letter-spacing:0.147px;left:44px">TORNILLOMA4x30</span>
<span class="t" style="top:241.51px;font-size:10.3px;letter-spacing:0.019px;left:167.3px">TORNILLOS MADERA 4x30</span>
<span class="t" style="top:241.51px;font-size:10.3px;letter-spacing:0.15px;right:399.35px">10</span>
<span class="t" style="top:241.51px;font-size:10.3px;letter-spacing:0.15px;right:322.35px">0.00</span>
<span class="t" style="top:241.51px;font-size:10.3px;letter-spacing:0.15px;right:235.35px">45.26</span>
<span class="t" style="top:241.51px;font-size:10.3px;letter-spacing:0.15px;right:160.85px">45.26</span>
<span class="t" style="top:241.51px;font-size:10.3px;letter-spacing:0.15px;right:99.35px">0.00</span>
<span class="t" style="top:241.51px;font-size:10.3px;letter-spacing:0.15px;right:38.85px">100.000000</span>
<span class="t" style="top:255.51px;font-size:10.3px;letter-spacing:0.147px;left:44px">TORNILLOMA4x40</span>
<span class="t" style="top:255.51px;font-size:10.3px;letter-spacing:0.019px;left:167.3px">TORNILLOS MADERA 4x40</span>
<span class="t" style="top:255.51px;font-size:10.3px;letter-spacing:0.15px;right:399.35px">10</span>
<span class="t" style="top:255.51px;font-size:10.3px;letter-spacing:0.15px;right:322.35px">0.00</span>
<span class="t" style="top:255.51px;font-size:10.3px;letter-spacing:0.15px;right:235.35px">116.85</span>
<span class="t" style="top:255.51px;font-size:10.3px;letter-spacing:0.15px;right:160.85px">116.85</span>
<span class="t" style="top:255.51px;font-size:10.3px;letter-spacing:0.15px;right:99.35px">0.00</span>
<span class="t" style="top:255.51px;font-size:10.3px;letter-spacing:0.15px;right:38.85px">100.000000</span>
</div>
<svg style="left:0px;top:0px;" width="170" height="27" viewBox="0 0 170 27"><path d="M4.3 11.2C4.6 7.6 8 5.6 11.6 6.6L11.9 4.2 16.6 8.3 11 11.6 11.3 9.4C8.8 8.6 6.3 9.4 4.3 11.2z" fill="#e4002b"/><path d="M16.2 12.2C15.9 15.8 12.5 17.8 8.9 16.8L8.6 19 3.9 15 9.5 11.8 9.2 14C11.7 14.8 14.2 14 16.2 12.2z" fill="#fff" stroke="#9aa4ad" stroke-width="1"/><rect x="27.1" y="2.3" width="8.4" height="18.6" fill="#e4e4e4"/><rect x="27.1" y="2.3" width="1.6" height="18.6" fill="#d4d4d4"/><rect x="27.1" y="2.3" width="8.4" height="1.4" fill="#d4d4d4"/><rect x="34.900000000000006" y="2.3" width=".7" height="18.6" fill="#d4d4d4"/><rect x="29.3" y="4.4" width="2.2" height="2.3" fill="#fff"/><rect x="32.300000000000004" y="4.4" width="2.2" height="2.3" fill="#fff"/><rect x="29.3" y="7.65" width="2.2" height="2.3" fill="#fff"/><rect x="32.300000000000004" y="7.65" width="2.2" height="2.3" fill="#fff"/><rect x="29.3" y="10.9" width="2.2" height="2.3" fill="#fff"/><rect x="32.300000000000004" y="10.9" width="2.2" height="2.3" fill="#fff"/><rect x="29.3" y="14.15" width="2.2" height="2.3" fill="#fff"/><rect x="32.300000000000004" y="14.15" width="2.2" height="2.3" fill="#fff"/><rect x="29.3" y="17.4" width="2.2" height="2.3" fill="#fff"/><rect x="32.300000000000004" y="17.4" width="2.2" height="2.3" fill="#fff"/><rect x="25.3" y="20.2" width="8.4" height="1.500" fill="#d4d4d4"/><rect x="35.6" y="15.2" width="7.4" height="6" rx="1" fill="#fff" stroke="#d6d6d6" stroke-width="1.2"/><path d="M37 15V13.4a2.3 2.3 0 0 1 4.4-.9" fill="none" stroke="#d6d6d6" stroke-width="1.2"/><rect x="38.8" y="17.3" width="1" height="2" fill="#d6d6d6"/><rect x="49.3" y="2.3" width="8.4" height="18.6" fill="#a3a3a3"/><rect x="49.3" y="2.3" width="1.6" height="18.6" fill="#636363"/><rect x="49.3" y="2.3" width="8.4" height="1.4" fill="#636363"/><rect x="57.099999999999994" y="2.3" width=".7" height="18.6" fill="#636363"/><rect x="51.5" y="4.4" width="2.2" height="2.3" fill="#fff"/><rect x="54.5" y="4.4" width="2.2" height="2.3" fill="#fff"/><rect x="51.5" y="7.65" width="2.2" height="2.3" fill="#fff"/><rect x="54.5" y="7.65" width="2.2" height="2.3" fill="#fff"/><rect x="51.5" y="10.9" width="2.2" height="2.3" fill="#fff"/><rect x="54.5" y="10.9" width="2.2" height="2.3" fill="#fff"/><rect x="51.5" y="14.15" width="2.2" height="2.3" fill="#fff"/><rect x="54.5" y="14.15" width="2.2" height="2.3" fill="#fff"/><rect x="51.5" y="17.4" width="2.2" height="2.3" fill="#fff"/><rect x="54.5" y="17.4" width="2.2" height="2.3" fill="#fff"/><rect x="47.5" y="20.2" width="8.4" height="1.500" fill="#636363"/><rect x="56.8" y="15.6" width="7.6" height="5.6" rx="1" fill="#fff" stroke="#6b6b6b" stroke-width="1.3"/><path d="M58.3 15.4V14a2.3 2.3 0 0 1 4.6 0v1.4" fill="none" stroke="#6b6b6b" stroke-width="1.3"/><rect x="60.1" y="17.4" width="1" height="2.2" fill="#6b6b6b"/><rect x="69.800" y="4.300" width="16.600" height="16.600" fill="#fff" stroke="#6b6b6b" stroke-width="1.600"/><rect x="72.4" y="2.2" width="2.2" height="3.4" fill="#6b6b6b"/><rect x="81.2" y="2.2" width="2.2" height="3.4" fill="#6b6b6b"/><rect x="75.6" y="3.6" width="4.6" height="1.2" fill="#6b6b6b"/><path d="M76.4 8v6.200h5M81.300 8v10.600" fill="none" stroke="#6b6b6b" stroke-width="2.500"/><path d="M94.5 5.5L96.5 2.6H108.2V18.2L105.8 21" fill="#b9b9b9" stroke="#6b6b6b" stroke-width="1"/><rect x="92.6" y="6.2" width="12.8" height="14.8" fill="#fff" stroke="#6b6b6b" stroke-width="1.2"/><path d="M95.9 11.3c0-4.600 6.600-4.500 6.600-.4 0 2.600-3.300 2.600-3.300 5.300" fill="none" stroke="#6b6b6b" stroke-width="2.600"/><rect x="97.900" y="17.300" width="2.700" height="2.600" fill="#6b6b6b"/><path d="M112.4 2.3L119.6 2.3V21.5L112.4 18.2z" fill="#6b6b6b"/><path d="M119.6 3.2H125.2V7.2M125.2 14V17H119.6" fill="none" stroke="#6b6b6b" stroke-width="1.5"/><path d="M122.2 9.1H127.2V6.4L131.7 10.5 127.2 14.6V11.9H122.2z" fill="#6b6b6b"/><rect x="148.7" y="8.8" width="5.4" height="1" fill="#666"/><path d="M148.6 11.6h5.6L151.4 15z" fill="#666"/></svg>
<svg style="left:880px;top:0px;" width="143" height="27" viewBox="0 0 143 27"><path d="M23.5 12.5H33.5" stroke="#000" stroke-width="1"/><rect x="68.5" y="9.5" width="7.2" height="7.2" rx="1.3" fill="none" stroke="#000" stroke-width="1"/><path d="M70.6 9.3V8.8a1.3 1.3 0 0 1 1.3-1.3H76.4a1.3 1.3 0 0 1 1.3 1.3V13.4a1.3 1.3 0 0 1-1.3 1.3H75.9" fill="none" stroke="#000" stroke-width="1"/><path d="M114.3 7.3L124 17M124 7.3L114.3 17" stroke="#000" stroke-width="1.05"/></svg>
<svg style="left:935px;top:27px;" width="88" height="24" viewBox="0 0 88 24"><path d="M8.3 12.7L12.7 7.3 17.1 12.7 15.3 14.3 12.7 11.1 10.1 14.3z" fill="#fff" stroke="#3c3c3c" stroke-width="1.1" stroke-linejoin="round"/><rect x="28.6" y="10.4" width="10" height="3.6" rx="1.2" fill="#fff" stroke="#3c3c3c" stroke-width="1"/><rect x="52.5" y="6.5" width="8" height="6" rx="1" fill="#fff" stroke="#3c3c3c" stroke-width="1"/><rect x="54.5" y="8.4" width="4" height="1.6" fill="#3c3c3c"/><rect x="49.5" y="9.5" width="8" height="6" rx="1" fill="#fff" stroke="#3c3c3c" stroke-width="1"/><rect x="51.4" y="11.5" width="4.2" height="1.8" fill="#fff" stroke="#3c3c3c" stroke-width="1"/><path d="M72.3 7.3L74.5 5.9 77.5 8.7 80.5 5.9 82.7 7.300 79.700 10.500 82.700 13.700 80.500 15.100 77.500 12.300 74.500 15.100 72.300 13.700 75.300 10.500z" fill="#fff" stroke="#3c3c3c" stroke-width="1.100" stroke-linejoin="round"/></svg>
<svg style="left:0px;top:0px;" width="1023" height="140" viewBox="0 0 1023 140"><path d="M29.6 67.6L36.3 62.6H54.6V83.2L50.2 87.4H29.6z" fill="#f4f7fb"/><path d="M50.2 67.6L54.9 62.4V83.4L50.2 87.9z" fill="#6d6e71"/><path d="M29.7 67.6H50.2V87.3H29.7zM29.7 67.6L36.4 62.7H54.6M29.7 71.6H50.2" fill="none" stroke="#6d6e71" stroke-width="1.3"/><path d="M35.200 83V77.600H33.400L36.100 74.200 38.800 77.600H37V83zM42.600 83V77.600H40.800L43.500 74.200 46.200 77.600H44.400V83z" fill="#6d6e71"/><rect x="33.2" y="84.1" width="12.6" height="1.2" fill="#6d6e71"/><rect x="96.2" y="66" width="1" height="9.8" fill="#6d6e71"/><rect x="97.8" y="66" width="1.6" height="9.8" fill="#6d6e71"/><rect x="100" y="66" width="1" height="9.8" fill="#6d6e71"/><rect x="101.6" y="66" width="0.7" height="9.8" fill="#6d6e71"/><rect x="104.4" y="66" width="0.8" height="9.8" fill="#6d6e71"/><rect x="105.8" y="66" width="1.6" height="9.8" fill="#6d6e71"/><rect x="108" y="66" width="1" height="9.8" fill="#6d6e71"/><rect x="109.6" y="66" width="1" height="9.8" fill="#6d6e71"/><rect x="111.2" y="66" width="2.4" height="9.8" fill="#6d6e71"/><rect x="114.2" y="66" width="1" height="9.8" fill="#6d6e71"/><rect x="115.8" y="66" width="1.8" height="9.8" fill="#6d6e71"/><rect x="118.2" y="66" width="0.8" height="9.8" fill="#6d6e71"/><rect x="119.6" y="66" width="1" height="9.8" fill="#6d6e71"/><rect x="121.2" y="66" width="0.8" height="9.8" fill="#6d6e71"/><text x="97.7" y="83.8" font-family="Liberation Sans" font-size="8.6" letter-spacing="0.9" fill="#6d6e71">0000</text><rect x="167.3" y="62.3" width="15.6" height="9" fill="#6d6e71"/><path d="M182.9 65.8H188.2L191.9 70.6V75.4H182.9z" fill="#6d6e71"/><path d="M184.3 67.2H187.6L189.9 70.6H184.3z" fill="#eef3fa"/><circle cx="186.4" cy="76.2" r="2.3" fill="#eef3fa" stroke="#6d6e71" stroke-width="1.3"/><g transform="rotate(8 174 78)"><rect x="167.2" y="69.2" width="14" height="17.6" rx="1.6" fill="#f2f6fb" stroke="#6d6e71" stroke-width="1.2"/><path d="M171 69.6c0-3 6.4-3 6.4 0z" fill="#f2f6fb" stroke="#6d6e71" stroke-width="1.1"/><path d="M169.6 73.6h9.2M169.6 76.2h9.2M169.6 78.8h9.2M169.6 81.4h6.2" stroke="#6d6e71" stroke-width="1.1"/></g><rect x="223.4" y="57.8" width="14.2" height="17.4" rx="2.2" fill="#f2f6fb" stroke="#6d6e71" stroke-width="1.3"/><path d="M227.4 58.2c0-2.8 6.2-2.8 6.2 0z" fill="#6d6e71"/><path d="M225.6 61.6h5M225.6 63.7h5M225.6 65.8h5M225.6 67.9h5M225.6 70h5M225.6 72.1h5" stroke="#6d6e71" stroke-width="0.9" stroke-dasharray="1.6 .7"/><path d="M235.6 63.4c-.6-1.3-3.8-1.4-3.8.6 0 2.100 4 1.300 4 3.500 0 2.100-3.600 2-4.200.5M233.700 60.800v10.600" fill="none" stroke="#6d6e71" stroke-width="1.100"/><path d="M230 79.600v16.400M226.300 96.700h7.400M222.300 81.800h15.400" stroke="#6d6e71" stroke-width="1.500" fill="none"/><path d="M223.600 82l-3 6.200M223.600 82l3 6.200M236.400 82l-3 6.200M236.400 82l3 6.200" stroke="#6d6e71" stroke-width=".8" fill="none"/><path d="M220 88.200h7.200a3.600 3.400 0 0 1-7.200 0zM232.800 88.200h7.200a3.600 3.400 0 0 1-7.200 0z" fill="#6d6e71"/><circle cx="230" cy="80" r="1.300" fill="#6d6e71"/><rect x="223.200" y="100.300" width="5.800" height="5.400" fill="#6d6e71"/><rect x="231" y="107.100" width="6.200" height="5.400" fill="#6d6e71"/><rect x="231" y="114" width="6.200" height="5.500" fill="#6d6e71"/><path d="M226.800 105.700V117h4.400M226.800 110h4.400" stroke="#6d6e71" stroke-width="1.400" fill="none"/><path d="M376.600 59.500L388.800 56.200 390.800 59.500z" fill="#6d6e71"/><rect x="376.900" y="59.700" width="13.800" height="15" fill="#f2f6fb" stroke="#6d6e71" stroke-width="1.300"/><rect x="374.700" y="62.800" width="3" height="2" rx=".8" fill="#6d6e71"/><rect x="374.700" y="69.800" width="3" height="2" rx=".8" fill="#6d6e71"/><path d="M380.800 70.600V66.600H379.500L381.400 64 383.300 66.600H382V70.600zM385.400 70.600V66.600H384.100L386 64 387.900 66.600H386.600V70.600z" fill="#6d6e71"/><rect x="379.200" y="71.800" width="9.200" height="1" fill="#6d6e71"/><path d="M379.6 88.10000000000001c-.9-2.300-6.100-2.500-6.100.7 0 3.300 6.300 2 6.300 5.500 0 3.300-6 3.300-6.800.3M376.5 83.9v13.600" fill="none" stroke="#6d6e71" stroke-width="1.500"/><path d="M392.70000000000005 88.10000000000001c-.9-2.300-6.100-2.500-6.100.7 0 3.300 6.300 2 6.300 5.500 0 3.300-6 3.300-6.800.3M389.6 83.9v13.600" fill="none" stroke="#6d6e71" stroke-width="1.500"/><path d="M377.800 83c1.400-3.800 6.400-4.400 8.800-1.600" fill="none" stroke="#6d6e71" stroke-width="1.400"/><path d="M384.600 83.200l3.800-.4-.4-4z" fill="#6d6e71"/><rect x="373.800" y="102.400" width="14.600" height="16.600" rx="1" fill="#f2f6fb" stroke="#6d6e71" stroke-width="1.200"/><path d="M378 102.600c0-2.400 5.800-2.400 5.800 0z" fill="#6d6e71"/><rect x="375.800" y="105.600" width="2.400" height="2.400" fill="none" stroke="#6d6e71" stroke-width=".9"/><rect x="375.800" y="109.800" width="2.400" height="2.400" fill="none" stroke="#6d6e71" stroke-width=".9"/><rect x="375.800" y="114.200" width="2.400" height="2.400" fill="none" stroke="#6d6e71" stroke-width=".9"/><path d="M380 106.800h6M380 111h3M380 115.400h2.400" stroke="#6d6e71" stroke-width="1.100"/><path d="M383.600 112.400L385.400 110.600H392.600V117.400L390.800 119.300H383.600z" fill="#f2f6fb" stroke="#6d6e71" stroke-width="1"/><path d="M390.800 112.400L392.800 110.400V117.500L390.800 119.500z" fill="#6d6e71"/><path d="M383.600 112.400H390.800V119.300M386 114.400v3.200M388.400 114.400v3.200M385.600 117.800h3.400" stroke="#6d6e71" stroke-width=".9" fill="none"/><rect x="538.700" y="64.600" width="19" height="22.800" rx="1.600" fill="#f2f6fb" stroke="#6d6e71" stroke-width="1.300"/><path d="M543.600 65.200v-.8c0-3 8.800-3 8.800 0v.8z" fill="#6d6e71"/><rect x="541" y="68.600" width="4" height="4" fill="none" stroke="#6d6e71" stroke-width=".9"/><rect x="541" y="75" width="4" height="4" fill="none" stroke="#6d6e71" stroke-width=".9"/><rect x="541" y="81.400" width="4" height="4" fill="#fff" stroke="#6d6e71" stroke-width=".9"/><path d="M541.800 70.200l1.400 1.800 2.800-4.200M541.800 76.600l1.400 1.800 2.800-4.200" fill="none" stroke="#6d6e71" stroke-width="1.200"/><path d="M547.800 70.700h8M547.800 77.100h8M547.800 83.500h8" stroke="#6d6e71" stroke-width="1.300"/><path d="M613.700 62.900H628.400L632.400 66.600V87.200H613.700z" fill="#f2f6fb" stroke="#6d6e71" stroke-width="1.300"/><path d="M627.200 62.900V67.600H632.400z" fill="#f2f6fb" stroke="#6d6e71" stroke-width="1"/><path d="M628.400 64.200l3 2.800" stroke="#6d6e71" stroke-width="1"/><rect x="611.300" y="65.7" width="3.800" height="2.200" rx=".9" fill="#6d6e71"/><rect x="611.300" y="69.4" width="3.800" height="2.200" rx=".9" fill="#6d6e71"/><rect x="611.300" y="78" width="3.800" height="2.200" rx=".9" fill="#6d6e71"/><rect x="611.300" y="81.8" width="3.800" height="2.200" rx=".9" fill="#6d6e71"/><path d="M618.200 71.6h5.400" stroke="#6d6e71" stroke-width="1.100"/><path d="M626.200 71.39999999999999l1.300 1.300 2.500-2.700" fill="none" stroke="#6d6e71" stroke-width="1.200"/><path d="M618.200 76.5h5.400" stroke="#6d6e71" stroke-width="1.100"/><path d="M626.200 76.3l1.300 1.300 2.500-2.700" fill="none" stroke="#6d6e71" stroke-width="1.200"/><path d="M618.200 81.6h5.400" stroke="#6d6e71" stroke-width="1.100"/><path d="M626.200 81.39999999999999l1.300 1.300 2.500-2.700" fill="none" stroke="#6d6e71" stroke-width="1.200"/><path d="M696.6 67.4L706.1 62.3 715.6 67.4V79H696.6z" fill="#f2f6fb" stroke="#6d6e71" stroke-width="1.2" stroke-linejoin="round"/><path d="M698.2 71H700.1V72.5H701.9V71H703.8V76.4H698.2z" fill="#6d6e71"/><path d="M702.2 76L711.85 70.6 721.5 76V87.3H702.2z" fill="#f2f6fb" stroke="#6d6e71" stroke-width="1.2" stroke-linejoin="round"/><path d="M704.3 79.3H706.5500000000001V80.8H708.35V79.3H710.6V85H704.3z" fill="#6d6e71"/><path d="M712.7 79.3H715.2V80.8H717.0V79.3H719.5V85H712.7z" fill="#6d6e71"/><path d="M769.6 71.7L782.1 64.2 794.6 71.7V85.4H769.6z" fill="#f2f6fb" stroke="#6d6e71" stroke-width="1.3" stroke-linejoin="round"/><path d="M771.8 75.5H775.4V77.0H777.1999999999999V75.5H780.8V82.7H771.8z" fill="#6d6e71"/><path d="M783.1 75.5H786.7V77.0H788.5V75.5H792.1V82.7H783.1z" fill="#6d6e71"/><rect x="875.100" y="64.500" width="18.100" height="22.500" rx="2.800" fill="#f2f6fb" stroke="#6d6e71" stroke-width="1.500"/><path d="M881.300 66.100v-1.700c0-3.400 5.600-3.400 5.600 0v1.700z" fill="#f2f6fb" stroke="#6d6e71" stroke-width="1.200"/><circle cx="883.900" cy="72.100" r="3.700" fill="none" stroke="#6d6e71" stroke-width="1.200"/><path d="M883.900 72.100L886.700 69.500M883.900 72.100H887.600" stroke="#6d6e71" stroke-width=".9" fill="none"/><path d="M877.800 78.500h12.200M877.800 81.400h12.200M877.800 84.400h7.400" stroke="#6d6e71" stroke-width="1.200"/><rect x="877.800" y="79.100" width="12.200" height="1.700" fill="#c4c7cc"/></svg>
<svg style="left:0px;top:140px;" width="660" height="50" viewBox="0 140 660 50"><path d="M17.6 179.6V154.6H32.3L36.8 159.1V160" fill="none" stroke="#808285" stroke-width="1.350"/><path d="M32.3 154.6V159.1H36.8" fill="none" stroke="#808285" stroke-width="1"/><path d="M17.6 179.6H34.8" stroke="#808285" stroke-width="1.100"/><circle cx="31.7" cy="168" r="6.8" fill="#e9f0f9" stroke="#808285" stroke-width="2.5"/><path d="M35.81 173.91L39.00 179.8H42.8V177.40L37.61 172.11z" fill="#808285"/><path d="M56.7 179.6V154.6H76.8L81.3 159.1V179.6" fill="none" stroke="#808285" stroke-width="1.350"/><path d="M76.8 154.6V159.1H81.3" fill="none" stroke="#808285" stroke-width="1"/><circle cx="70.4" cy="168" r="6.8" fill="#e9f0f9" stroke="#808285" stroke-width="2.5"/><path d="M74.51 173.91L77.80 179.8H81.6V177.40L76.31 172.11z" fill="#808285"/><path d="M97.7 179.6V154.6H114.1L118.6 159.1V163" fill="none" stroke="#808285" stroke-width="1.350"/><path d="M114.1 154.6V159.1H118.6" fill="none" stroke="#808285" stroke-width="1"/><circle cx="108.5" cy="169" r="7.6" fill="#e9f0f9" stroke="#808285" stroke-width="2"/><path d="M113.17 175.47L117.00 179.8H120.8V177.40L114.97 173.67z" fill="#808285"/><rect x="103.300" y="166.600" width="1.200" height="5.400" fill="#808285"/><path d="M102.400 167.900l1.300-1.300" stroke="#808285" stroke-width=".9"/><ellipse cx="106.700" cy="169.300" rx="1.150" ry="2.250" fill="none" stroke="#808285" stroke-width="1.100"/><ellipse cx="109.900" cy="169.300" rx="1.150" ry="2.250" fill="none" stroke="#808285" stroke-width="1.100"/><circle cx="112.300" cy="167.700" r=".85" fill="#808285"/><circle cx="114.300" cy="171" r=".85" fill="#808285"/><path d="M114.500 166.600L112.100 172.100" stroke="#808285" stroke-width=".9"/><path d="M134.6 179.6V154.6H153.4L159.4 160.6V179.6" fill="none" stroke="#808285" stroke-width="1.350"/><path d="M153.4 154.6V160.6H159.4" fill="none" stroke="#808285" stroke-width="1"/><rect x="138.200" y="168.200" width="2.600" height="11.400" fill="#808285"/><path d="M141.2 173.9L148.6 168.3V171.6H156V176.20000000000002H148.6V179.5z" fill="#808285"/><path d="M173.5 179.6V154.6H192.4L198.4 160.6V179.6" fill="none" stroke="#808285" stroke-width="1.350"/><path d="M192.4 154.6V160.6H198.4" fill="none" stroke="#808285" stroke-width="1"/><path d="M178.7 173.9L186.1 168.3V171.6H193.9V176.20000000000002H186.1V179.5z" fill="#808285"/><path d="M212.3 179.6V154.6H231.5L237.5 160.6V179.6" fill="none" stroke="#808285" stroke-width="1.350"/><path d="M231.5 154.6V160.6H237.5" fill="none" stroke="#808285" stroke-width="1"/><path d="M232 173.9L224.6 168.3V171.6H217.4V176.20000000000002H224.6V179.5z" fill="#808285"/><path d="M251.4 179.6V154.6H270.6L276.6 160.6V179.6" fill="none" stroke="#808285" stroke-width="1.350"/><path d="M270.6 154.6V160.6H276.6" fill="none" stroke="#808285" stroke-width="1"/><path d="M269.6 173.9L262.20000000000005 168.3V171.6H255V176.20000000000002H262.20000000000005V179.5z" fill="#808285"/><rect x="270" y="168.200" width="2.600" height="11.400" fill="#808285"/><path d="M290.8 173.4V154.6H302.0L305.6 158.2V163" fill="none" stroke="#808285" stroke-width="1.350"/><path d="M302.0 154.6V158.2H305.6" fill="none" stroke="#808285" stroke-width="1"/><path d="M290.800 173.400H302" stroke="#808285" stroke-width="1.100"/><path d="M302.800 179.300V163.700H311.400L314.800 167V179.300z" fill="#e6eef8" stroke="#808285" stroke-width="1.100"/><path d="M311.400 163.700V167H314.800" fill="none" stroke="#808285" stroke-width="1"/><path d="M305.6 168.9L301.20000000000005 165.6V167.5H294V170.3H301.20000000000005V172.20000000000002z" fill="#808285"/><rect x="332.400" y="154.300" width="15.800" height="2.800" fill="#808285"/><path d="M328.900 159.200H351.700V167H340V171H328.900z" fill="#808285"/><rect x="348" y="162" width="1.600" height="1.400" fill="#e3ecf7"/><rect x="334.200" y="167.400" width="8.400" height="7.200" fill="#808285"/><rect x="336.400" y="169.800" width="5" height="2.400" fill="#e3ecf7"/><circle cx="348" cy="173.200" r="7.600" fill="#e3ecf7"/><path d="M354.72 171.63L354.72 174.77L352.87 175.03L352.74 175.35L353.86 176.84L351.64 179.06L350.15 177.94L349.83 178.07L349.57 179.92L346.43 179.92L346.17 178.07L345.85 177.94L344.36 179.06L342.14 176.84L343.26 175.35L343.13 175.03L341.28 174.77L341.28 171.63L343.13 171.37L343.26 171.05L342.14 169.56L344.36 167.34L345.85 168.46L346.17 168.33L346.43 166.48L349.57 166.48L349.83 168.33L350.15 168.46L351.64 167.34L353.86 169.56L352.74 171.05L352.87 171.37z" fill="#808285"/><circle cx="348" cy="173.2" r="2.9" fill="#e3ecf7"/><rect x="372.100" y="154.200" width="17.800" height="3.200" fill="#808285"/><path d="M368 159.500H394V173.600H390.300V167.400H371.700V173.600H368z" fill="#808285"/><rect x="390.400" y="162.600" width="1.600" height="1.600" fill="#e3ecf7"/><rect x="374.100" y="168.900" width="14.100" height="8.700" fill="#808285"/><rect x="377.600" y="171" width="7.400" height="3" fill="#e3ecf7"/><rect x="407.9" y="156.4" width="17.400000000000034" height="22.599999999999994" rx="2.400" fill="none" stroke="#808285" stroke-width="1.300"/><path d="M413.2 158.20000000000002v-1.800c0-3 6.6-3 6.6 0v1.800z" fill="#e6eef8" stroke="#808285" stroke-width="1.100"/><circle cx="416.5" cy="163.2" r="3.6" fill="none" stroke="#808285" stroke-width="1.100"/><path d="M416.5 163.2L419.092 160.60799999999998M416.5 163.2H420.1" stroke="#808285" stroke-width=".9"/><path d="M410.4 170.9H419.8" stroke="#808285" stroke-width="1.100"/><path d="M410.4 173.5H419.8" stroke="#808285" stroke-width="1.100"/><path d="M410.4 176.1H417" stroke="#808285" stroke-width="1.100"/><rect x="420.200" y="167" width="13.400" height="13.200" fill="#dfe9f5"/><path d="M421.200 168H430.400L432.700 170.300V179.500H421.200z" fill="#808285"/><rect x="423.400" y="173" width="7.200" height="5.600" fill="#e9f0f9"/><rect x="424.200" y="168" width="4.600" height="3" fill="#e9f0f9"/><rect x="426.800" y="168.400" width="1.400" height="2.200" fill="#808285"/><rect x="450.3" y="156.1" width="13.800000000000011" height="19.900000000000006" rx="2.400" fill="none" stroke="#808285" stroke-width="1.300"/><path d="M453.59999999999997 157.9v-1.800c0-3 6.6-3 6.6 0v1.800z" fill="#e6eef8" stroke="#808285" stroke-width="1.100"/><circle cx="456.9" cy="162.2" r="3.3" fill="none" stroke="#808285" stroke-width="1.100"/><path d="M456.9 162.2L459.27599999999995 159.82399999999998M456.9 162.2H460.2" stroke="#808285" stroke-width=".9"/><path d="M453 166.9H461.6" stroke="#808285" stroke-width="1.100"/><path d="M453 169H461.6" stroke="#808285" stroke-width="1.100"/><path d="M447.500 163V179.300H466L470 171.200H451.200L447.900 178.600" fill="none" stroke="#808285" stroke-width="1.200" stroke-linejoin="round"/><path d="M451.200 171.400H469.800L466 179.200H447.800z" fill="#e3ecf7" stroke="#808285" stroke-width="1.200" stroke-linejoin="round"/><path d="M464.600 163.500H466.200V171" fill="none" stroke="#808285" stroke-width="1.100"/><path d="M485.6 179.6V154.6H500.5L504.5 158.6V161" fill="none" stroke="#808285" stroke-width="1.350"/><path d="M500.5 154.6V158.6H504.5" fill="none" stroke="#808285" stroke-width="1"/><path d="M485.6 179.6H502.5" stroke="#808285" stroke-width="1.100"/><path d="M504.500 177.400V179.600" stroke="#808285" stroke-width="1.100"/><path d="M499 169.3L494.8 166.0V168.0H490.2V170.60000000000002H494.8V172.60000000000002z" fill="#808285"/><text x="501.600" y="173.200" font-family="Liberation Sans" font-style="italic" font-size="11.500" fill="#808285">e</text><path d="M509.600 171.600c1.800-.6 2-3.400 1-5.200-1.600-2.800-5.800-3.300-8-1.200-2.600 2.400-2.300 6.600.4 8.300 1.600 1 3.600 1 5 .2" fill="none" stroke="#808285" stroke-width="1"/><rect x="524.900" y="160.200" width="24.400" height="13.200" fill="none" stroke="#808285" stroke-width="1.300"/><path d="M525.200 160.600L537.100 169.300 549 160.600" fill="none" stroke="#808285" stroke-width="1.200"/><circle cx="576" cy="166.800" r="11.700" fill="none" stroke="#808285" stroke-width="2.400"/><path d="M571.700 163.600c0-5.400 8.800-5.200 8.800-.3 0 3.200-4.300 3.300-4.300 6.700" fill="none" stroke="#808285" stroke-width="2.900"/><rect x="574.700" y="171.800" width="3" height="3" fill="#808285"/><path d="M602 154.100H620V161.500H617.800V156.200H606.500L611.900 158.600V172.800H617.800V168.100H620V174.800H611.900V179.900L602 175.300z" fill="#808285"/><path d="M615 163.100H623.200V160.200L628.200 165.100 623.200 170.100V167H615z" fill="#808285"/></svg>
<svg style="left:650px;top:694px;" width="30" height="24" viewBox="650 694 30 24"><circle cx="663.9" cy="702.6" r="4.2" fill="#666b73"/><path d="M658.6 702.400a5.400 5.400 0 0 1 10.700 0" fill="none" stroke="#666b73" stroke-width="1.100"/><rect x="657.700" y="700.800" width="1.700" height="3.600" rx=".8" fill="#666b73"/><rect x="668.500" y="700.800" width="1.700" height="3.600" rx=".8" fill="#666b73"/><path d="M669.400 704.200c0 1.500-1.400 2-3.400 2" fill="none" stroke="#dfe8f4" stroke-width="1"/><rect x="664.200" y="705.200" width="2.200" height="1.500" rx=".7" fill="#dfe8f4"/><path d="M655 714.800c0-5.600 3.600-6.800 5.800-7 .9.900 2 1.300 3.100 1.300s2.200-.4 3.100-1.300c2.200.2 5.800 1.400 5.800 7z" fill="#666b73"/></svg>
</div>
</body></html>
